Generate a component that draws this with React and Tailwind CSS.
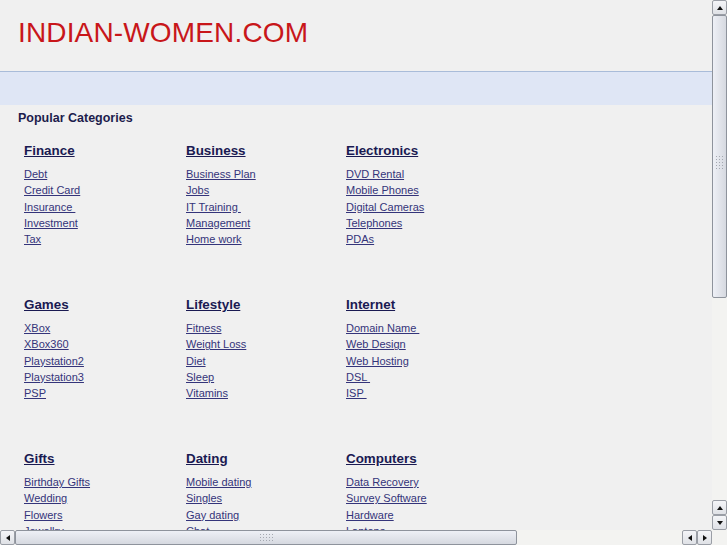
import React from 'react';

const groups = [
  [
    { title: 'Finance', links: ['Debt', 'Credit Card', 'Insurance ', 'Investment', 'Tax'] },
    { title: 'Business', links: ['Business Plan', 'Jobs', 'IT Training ', 'Management', 'Home work'] },
    { title: 'Electronics', links: ['DVD Rental', 'Mobile Phones', 'Digital Cameras', 'Telephones', 'PDAs'] },
  ],
  [
    { title: 'Games', links: ['XBox', 'XBox360', 'Playstation2', 'Playstation3', 'PSP'] },
    { title: 'Lifestyle', links: ['Fitness', 'Weight Loss', 'Diet', 'Sleep', 'Vitamins'] },
    { title: 'Internet', links: ['Domain Name ', 'Web Design', 'Web Hosting', 'DSL ', 'ISP '] },
  ],
  [
    { title: 'Gifts', links: ['Birthday Gifts', 'Wedding', 'Flowers', 'Jewellry', 'Toys'] },
    { title: 'Dating', links: ['Mobile dating', 'Singles', 'Gay dating', 'Chat', 'Personals'] },
    { title: 'Computers', links: ['Data Recovery', 'Survey Software', 'Hardware', 'Laptops', 'Software'] },
  ],
];

const font = { fontFamily: '"Liberation Sans", Arial, sans-serif' };

function Arrow({ dir }) {
  const pts = {
    up: '1,5 4,1 7,5',
    down: '1,1 4,5 7,1',
    left: '5,1 1,4 5,7',
    right: '1,1 5,4 1,7',
  }[dir];
  const flat = dir === 'up' || dir === 'down';
  return (
    <svg width={flat ? 8 : 6} height={flat ? 6 : 8} viewBox={flat ? '0 0 8 6' : '0 0 6 8'}>
      <polygon points={pts} fill="#111" />
    </svg>
  );
}

function ScrollButton({ dir }) {
  return (
    <div className="w-[15px] h-[15px] flex items-center justify-center border border-[#9a9ea6] rounded-[2px] bg-gradient-to-b from-[#f4f5f8] to-[#dfe1e6]">
      <Arrow dir={dir} />
    </div>
  );
}

function Grip({ vertical }) {
  return (
    <div className={`grid gap-[2px] ${vertical ? 'grid-cols-3' : 'grid-cols-5'}`}>
      {Array.from({ length: 15 }).map((_, i) => (
        <div key={i} className="w-[1px] h-[1px] bg-[#a4a8b0]" />
      ))}
    </div>
  );
}

export default function App() {
  return (
    <div className="w-[727px] h-[545px] grid grid-cols-[712px_15px] grid-rows-[530px_15px] bg-[#f0f0f0] overflow-hidden" style={font}>
      <div className="overflow-hidden">
        <div className="h-[71px] pl-[18px] pt-[17px]">
          <h1 className="text-[28px] leading-8 text-[#c8161a] tracking-[0.15px]">INDIAN-WOMEN.COM</h1>
        </div>
        <div className="h-[34px] border-t border-[#a9bcd9] bg-[#dfe6f5]" />
        <div className="pl-[18px] pt-[5px]">
          <h2 className="text-[12.5px] leading-4 font-bold text-[#1c1c4c]">Popular Categories</h2>
          <div className="pl-[6px] pt-[17px]">
            {groups.map((row, r) => (
              <div key={r} className="grid grid-cols-[162px_160px_160px] h-[154px]">
                {row.map(g => (
                  <div key={g.title}>
                    <a href="#" className="block w-max text-[13.4px] leading-4 font-bold text-[#1a1a52] underline">{g.title}</a>
                    <ul className="pt-[6px]">
                      {g.links.map(l => (
                        <li key={l} className="h-[16.3px] leading-[16px]">
                          <a href="#" className="text-[11px] text-[#34347a] underline whitespace-pre">{l}</a>
                        </li>
                      ))}
                    </ul>
                  </div>
                ))}
              </div>
            ))}
          </div>
        </div>
      </div>

      {/* vertical scrollbar */}
      <div className="flex flex-col bg-[#f3f3f1]">
        <ScrollButton dir="up" />
        <div className="h-[283px] border border-[#8e939c] rounded-[2px] bg-gradient-to-r from-[#eef0f6] to-[#d6d9e0] flex items-center justify-center">
          <div className="mt-[12px]"><Grip vertical /></div>
        </div>
        <div className="flex-1" />
        <ScrollButton dir="up" />
        <ScrollButton dir="down" />
      </div>

      {/* horizontal scrollbar */}
      <div className="flex bg-[#f3f3f1]">
        <ScrollButton dir="left" />
        <div className="w-[502px] border border-[#8e939c] rounded-[2px] bg-gradient-to-b from-[#eef0f6] to-[#d6d9e0] flex items-center justify-center">
          <Grip />
        </div>
        <div className="flex-1" />
        <ScrollButton dir="left" />
        <ScrollButton dir="right" />
      </div>
      <div className="bg-[#f3f3f1]" />
    </div>
  );
}
